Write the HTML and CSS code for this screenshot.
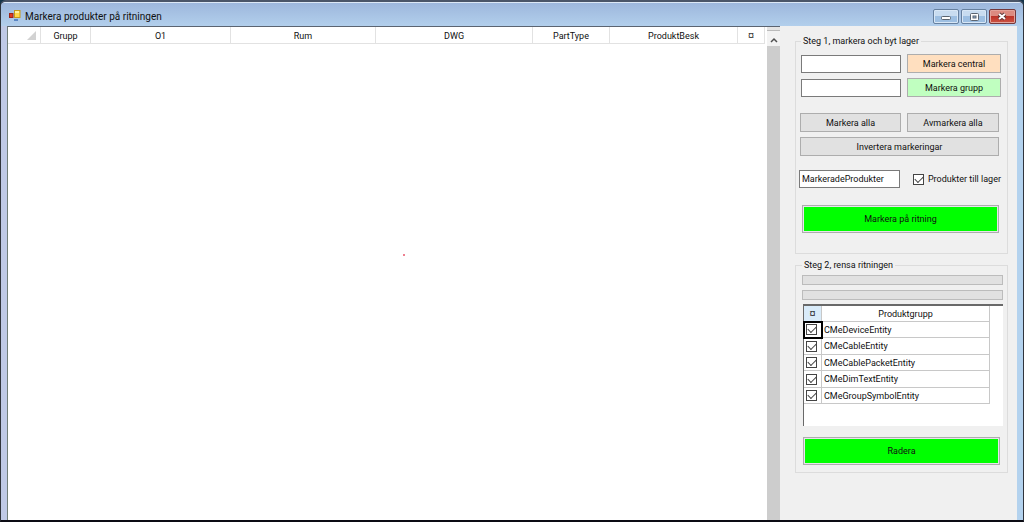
FILE: index.html
```html
<!DOCTYPE html>
<html lang="sv">
<head>
<meta charset="utf-8">
<title>Markera produkter på ritningen</title>
<link rel="stylesheet" href="styles.css">
</head>
<body>
<div class="window">
  <header class="titlebar">
    <svg class="app-icon" width="12" height="12" viewBox="0 0 12 12" aria-hidden="true">
      <rect x="5.500" y="0.500" width="5.500" height="7" fill="#ffd84a" stroke="#c79a1c"/>
      <rect x="6" y="1" width="4" height="2" fill="#fff0a0"/>
      <rect x="0.500" y="3.500" width="3.500" height="4" fill="#e03a20" stroke="#9c2218"/>
      <rect x="5" y="9" width="4" height="2" fill="#5a86c4"/>
    </svg>
    <h1 class="title">Markera produkter på ritningen</h1>
    <div class="window-buttons">
      <button class="win-btn" type="button" aria-label="Minimera"><svg width="24" height="13" viewBox="0 0 24 13"><rect x="7.500" y="6.500" width="9" height="3" rx="1" fill="#fff" stroke="#5b6570"/></svg></button>
      <button class="win-btn" type="button" aria-label="Maximera"><svg width="24" height="13" viewBox="0 0 24 13"><rect x="8.500" y="3.500" width="8" height="7" rx="1" fill="#fff" stroke="#5b6570"/><rect x="11" y="6" width="3" height="2" fill="#8fb2d8" stroke="#5b6570"/></svg></button>
      <button class="win-btn close" type="button" aria-label="Stäng"><svg width="24" height="13" viewBox="0 0 24 13"><path d="M9 4l6 5M15 4l-6 5" stroke="#5e3434" stroke-width="4"/><path d="M9 4l6 5M15 4l-6 5" stroke="#fff" stroke-width="2"/></svg></button>
    </div>
  </header>
  <main class="client">
    <section class="products">
      <div class="product-list">
        <table class="product-table">
          <colgroup><col class="c-sel"><col class="c-grupp"><col class="c-o1"><col class="c-rum"><col class="c-dwg"><col class="c-part"><col class="c-besk"><col class="c-mark"></colgroup>
          <thead><tr>
            <th class="corner"><svg width="9" height="9" viewBox="0 0 9 9" aria-hidden="true"><path d="M9 0v9H0z" fill="#d2d2d2"/></svg></th>
            <th>Grupp</th><th>O1</th><th>Rum</th><th>DWG</th><th>PartType</th><th>ProduktBesk</th><th class="sign">¤</th>
          </tr></thead>
        </table>
        <span class="dot"></span>
      </div>
      <div class="scrollbar">
        <button class="scroll-up" type="button" aria-label="Rulla upp"><svg width="8" height="6" viewBox="0 0 8 6"><path d="M1 5l3-3 3 3" fill="none" stroke="#505050" stroke-width="1.500"/></svg></button>
        <div class="thumb"></div>
      </div>
    </section>
    <form class="panel">
      <fieldset class="group step-one">
        <legend>Steg 1, markera och byt lager</legend>
        <div class="pair">
          <input class="field" type="text" aria-label="Central">
          <button class="btn peach" type="button">Markera central</button>
          <input class="field" type="text" aria-label="Grupp">
          <button class="btn mint" type="button">Markera grupp</button>
        </div>
        <div class="pair selection">
          <button class="btn" type="button">Markera alla</button>
          <button class="btn" type="button">Avmarkera alla</button>
          <button class="btn wide" type="button">Invertera markeringar</button>
        </div>
        <div class="layer">
          <input class="field" type="text" aria-label="Lager" value="MarkeradeProdukter">
          <label class="check-label"><input class="check" type="checkbox" checked>Produkter till lager</label>
        </div>
        <button class="btn-green" type="button"><span>Markera på ritning</span></button>
      </fieldset>
      <fieldset class="group step-two">
        <legend>Steg 2, rensa ritningen</legend>
        <div class="bar"></div>
        <div class="bar"></div>
        <div class="group-list">
          <table class="group-table">
            <colgroup><col class="c-check"><col></colgroup>
            <thead><tr><th class="mark sign">¤</th><th>Produktgrupp</th></tr></thead>
            <tbody>
              <tr><td class="current"><input class="check" id="g1" type="checkbox" checked></td><td><label for="g1">CMeDeviceEntity</label></td></tr>
              <tr><td><input class="check" id="g2" type="checkbox" checked></td><td><label for="g2">CMeCableEntity</label></td></tr>
              <tr><td><input class="check" id="g3" type="checkbox" checked></td><td><label for="g3">CMeCablePacketEntity</label></td></tr>
              <tr><td><input class="check" id="g4" type="checkbox" checked></td><td><label for="g4">CMeDimTextEntity</label></td></tr>
              <tr><td><input class="check" id="g5" type="checkbox" checked></td><td><label for="g5">CMeGroupSymbolEntity</label></td></tr>
            </tbody>
          </table>
        </div>
        <button class="btn-green" type="button"><span>Radera</span></button>
      </fieldset>
    </form>
  </main>
</div>
</body>
</html>
```
FILE: styles.css
```css
* { box-sizing: border-box; }
body {
  margin: 0;
  background: #14344a;
  color: #101010;
  font: 9px/12px Roboto, "Liberation Sans", sans-serif;
}
button, input { font: inherit; color: inherit; margin: 0; padding: 0; }
.window {
  display: flex;
  flex-direction: column;
  min-height: 100vh;
  border: 1px solid #30343c;
  border-top: 2px solid #4a5568;
  border-bottom: 2px solid #0c0c14;
  border-radius: 6px 6px 0 0;
  background: linear-gradient(90deg, #bfc9e6 50%, #b3d2ee 50%);
  overflow: hidden;
}
.titlebar {
  display: flex;
  align-items: center;
  height: 24px;
  padding: 0 7px 0 8px;
  border-top: 1px solid #dce8f6;
  background: linear-gradient(#9db7dc, #b2cfec);
}
.app-icon { flex: none; }
.title {
  flex: 1;
  margin: 4px 0 0 4px;
  font-size: 10px;
  line-height: 14px;
  font-weight: 400;
}
.app-icon, .window-buttons { margin-top: 3px; }
.window-buttons { display: flex; gap: 2px; }
.win-btn {
  display: flex;
  width: 26px;
  height: 15px;
  border: 1px solid #66809f;
  border-radius: 2px;
  background: linear-gradient(#c8dcf0 50%, #9dbfe2 50%);
  box-shadow: inset 0 0 0 1px #d8e7f6;
}
.win-btn.close {
  width: 27px;
  border-color: #74383b;
  background: linear-gradient(#dc8b80 45%, #bd3428 50%, #cc5444);
  box-shadow: inset 0 0 0 1px #e3a39a;
}
.client { display: flex; flex: 1; margin: 0 6px; background: #f0f0f0; }
.products {
  display: flex;
  flex: 1;
  min-width: 0;
  border-top: 1px solid #5b6471;
  border-left: 1px solid #707d78;
  background: #fff;
}
.product-list { position: relative; flex: 1; min-width: 0; }
.product-table { width: 100%; border-collapse: separate; border-spacing: 0; table-layout: fixed; }
.product-table th {
  height: 17px;
  padding: 1px 0 0;
  border: solid #e2e2e2;
  border-width: 0 1px 1px 0;
  font-weight: 400;
}
.product-table .corner { padding-right: 4px; }
.corner svg { display: block; margin-left: auto; }
.c-sel { width: 33px; }
.c-grupp { width: 50px; }
.c-o1 { width: 140px; }
.c-rum { width: 145px; }
.c-dwg { width: 157px; }
.c-part { width: 77px; }
.c-besk { width: 128px; }
.dot { position: absolute; left: 395px; top: 227px; width: 2px; height: 2px; background: #ee8090; }
.scrollbar { display: flex; flex-direction: column; width: 13px; margin-left: 2px; background: #f0f0f0; }
.scroll-up {
  display: flex;
  align-items: center;
  justify-content: center;
  height: 19px;
  padding-top: 6px;
  border: 0;
  background: linear-gradient(#e4e4e4 3px, #bbb 3px, #bbb 4px, #f3f3f3 4px);
}
.thumb { flex: 1; background: #cdcdcd; }
.panel {
  display: flex;
  flex-direction: column;
  gap: 5px;
  width: 237px;
  padding: 9px 9px 20px 15px;
}
.group { min-width: 0; margin: 0; border: 1px solid #dcdcdc; }
.group legend { padding: 0 2px; }
.step-one { padding: 7px 6px 20px 5px; }
.step-two { padding: 4px 4px 7px 6px; }
.pair { display: grid; grid-template-columns: 100px 1fr; gap: 5px 6px; }
.selection { margin: 16px 2px 14px -1px; grid-template-columns: 101px 1fr; }
.wide { grid-column: 1 / -1; }
.field {
  width: 100%;
  height: 18px;
  padding: 0 2px;
  border: 1px solid #7a7a7a;
  border-radius: 0;
  background: #fff;
}
.pair .field { align-self: center; }
.btn {
  height: 19px;
  border: 1px solid #adadad;
  border-radius: 0;
  background: #e1e1e1;
}
.peach { background: #ffdfbf; }
.mint { background: #c0ffc0; }
.layer { display: flex; align-items: center; justify-content: space-between; margin: 0 0 17px -2px; }
.layer .field { width: 101px; }
.check-label { display: flex; align-items: center; gap: 4px; white-space: nowrap; }
.check {
  appearance: none;
  display: block;
  flex: none;
  width: 11px;
  height: 11px;
  border: 1px solid #444;
  background: #fff;
}
.check:checked::before {
  content: "";
  display: block;
  width: 7px;
  height: 4px;
  margin: 1px;
  border: solid #444;
  border-width: 0 0 1px 1px;
  transform: rotate(-45deg);
}
.btn-green {
  display: block;
  width: 197px;
  height: 28px;
  margin-left: 1px;
  padding: 1px;
  border: 1px solid #adadad;
  border-radius: 0;
  background: #e8e4ec;
}
.btn-green span { display: flex; align-items: center; justify-content: center; height: 100%; background: #0f0; }
.bar { height: 10px; margin-bottom: 5px; border: 1px solid #bcbcbc; background: #e1e1e1; }
.group-list {
  height: 122px;
  margin: -1px 0 11px 1px;
  border: solid #696969;
  border-width: 2px 0 0 1px;
  background: #fff;
}
.group-table { width: 186px; border-collapse: separate; border-spacing: 0; table-layout: fixed; }
.c-check { width: 18px; }
.group-table th, .group-table td {
  height: 16px;
  padding: 0 2px;
  border: solid #c8c8c8;
  border-width: 0 1px 1px 0;
  font-weight: 400;
}
.group-table tr:nth-child(even) td { height: 17px; }
.group-table .mark { background: #d9ebf9; }
.product-table .sign, .group-table .sign { font-size: 8px; font-weight: 700; }
.group-table .current { outline: 2px solid #000; outline-offset: -1px; }
.group-table label { display: block; }
```
